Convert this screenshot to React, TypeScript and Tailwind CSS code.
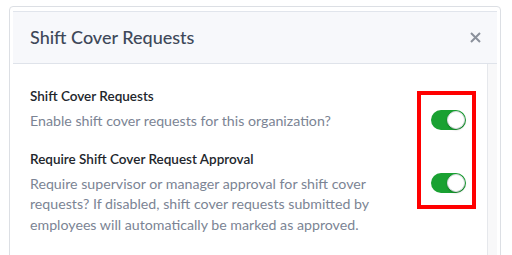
import React from 'react'

function Toggle() {
  return (
    <div className="relative h-[20px] w-[35px] shrink-0 rounded-full bg-[#1aa132]">
      <div className="absolute right-[1px] top-[1px] h-[18px] w-[18px] rounded-full border border-[#d6d9de] bg-white shadow-[0_1px_2px_rgba(0,0,0,0.25)]" />
    </div>
  )
}

function SettingRow({ label, desc, first }: { label: string; desc: string; first?: boolean }) {
  return (
    <div className={`flex items-start justify-between ${first ? '' : 'mt-[17px]'}`}>
      <div className="w-[350px]">
        <p className="text-[13.5px] leading-[20px] font-semibold text-[#22262c]">{label}</p>
        <p className="mt-[5px] text-[14.2px] leading-[20.5px] text-[#7b8494]">{desc}</p>
      </div>
      <div className="mr-[21px] mt-[24px]">
        <Toggle />
      </div>
    </div>
  )
}

export default function App() {
  return (
    <div className="h-[255px] w-[512px] overflow-hidden bg-white pl-[9px] pt-[6px] font-['Lato',sans-serif]">
      <div className="h-[260px] w-[492px] rounded-[4px] border border-[#dcdfe4] px-[3px] pt-[4px]">
        <div className="flex h-full flex-col border-t border-[#e1e5ec]">
          <div className="flex h-[52px] items-center justify-between border-b border-[#dfe3ea] bg-[#f7f8fb] pl-[17px] pr-[16px]">
            <h2 className="text-[18px] font-medium text-[#3e4859]">Shift Cover Requests</h2>
            <svg width="11" height="11" viewBox="0 0 11 11">
              <path d="M1 1L10 10M10 1L1 10" stroke="#8b919b" strokeWidth="2" />
            </svg>
          </div>
          <div className="flex flex-1">
            <div className="relative flex-1 pl-[17px] pt-[22px]">
              <SettingRow
                first
                label="Shift Cover Requests"
                desc="Enable shift cover requests for this organization?"
              />
              <SettingRow
                label="Require Shift Cover Request Approval"
                desc="Require supervisor or manager approval for shift cover requests? If disabled, shift cover requests submitted by employees will automatically be marked as approved."
              />
              <div className="absolute left-[404px] top-[27px] h-[118px] w-[59px] border-4 border-[#ff0000]" />
            </div>
            <div className="w-[10px] border-l border-[#e6e8ec] bg-[#f8f8f9]" />
          </div>
        </div>
      </div>
    </div>
  )
}
